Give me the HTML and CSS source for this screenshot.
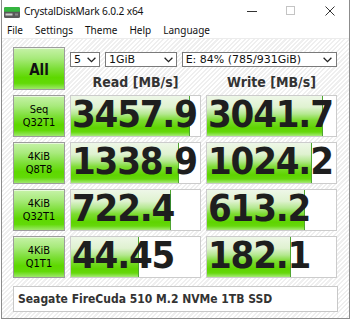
FILE: index.html
```html
<!DOCTYPE html>
<html>
<head>
<meta charset="utf-8">
<link rel="stylesheet" href="styles.css">
</head>
<body>
<div class="window">
  <div class="titlebar">
    <svg class="app-icon" width="16" height="11" viewBox="0 0 16 11">
      <rect x="0" y="0" width="16" height="11" rx="1.5" fill="#5a5a5a"/>
      <rect x="0" y="0" width="16" height="4.5" rx="1.5" fill="#35b540"/>
      <rect x="0" y="3" width="16" height="1.5" fill="#35b540"/>
      <rect x="1.5" y="6.5" width="7" height="2" fill="#cfcfcf"/>
      <rect x="11" y="6.5" width="3" height="2" fill="#8a8a8a"/>
    </svg>
    <span class="title">CrystalDiskMark 6.0.2 x64</span>
    <div class="controls">
      <span class="ctl"><svg width="10" height="10" viewBox="0 0 10 10"><line x1="0" y1="5.5" x2="10" y2="5.5" stroke="#333" stroke-width="1"/></svg></span>
      <span class="ctl"><svg width="10" height="10" viewBox="0 0 10 10"><rect x="0.5" y="0.5" width="8" height="8" fill="none" stroke="#c4c4c4" stroke-width="1"/></svg></span>
      <span class="ctl"><svg width="10" height="10" viewBox="0 0 10 10"><path d="M0.5 0.5 L9.5 9.5 M9.5 0.5 L0.5 9.5" stroke="#333" stroke-width="1"/></svg></span>
    </div>
  </div>
  <div class="menubar">
    <span>File</span><span>Settings</span><span>Theme</span><span>Help</span><span>Language</span>
  </div>
  <div class="main">
    <div class="grid">
      <div class="btn all">All</div>
      <div class="topright">
        <div class="selects">
          <div class="select s-count"><span>5</span><svg width="9" height="6" viewBox="0 0 9 6"><polyline points="0.6,0.8 4.5,4.7 8.4,0.8" fill="none" stroke="#222" stroke-width="1.3"/></svg></div>
          <div class="select s-size"><span>1GiB</span><svg width="9" height="6" viewBox="0 0 9 6"><polyline points="0.6,0.8 4.5,4.7 8.4,0.8" fill="none" stroke="#222" stroke-width="1.3"/></svg></div>
          <div class="select s-drive"><span>E: 84% (785/931GiB)</span><svg width="9" height="6" viewBox="0 0 9 6"><polyline points="0.6,0.8 4.5,4.7 8.4,0.8" fill="none" stroke="#222" stroke-width="1.3"/></svg></div>
        </div>
        <div class="headers">
          <div class="hdr">Read [MB/s]</div>
          <div class="hdr">Write [MB/s]</div>
        </div>
      </div>

      <div class="btn label">Seq<br>Q32T1</div>
      <div class="val" style="--w:119px"><span class="num">3457.9</span></div>
      <div class="val" style="--w:116px"><span class="num">3041.7</span></div>

      <div class="btn label">4KiB<br>Q8T8</div>
      <div class="val" style="--w:108px"><span class="num">1338.9</span></div>
      <div class="val" style="--w:105px"><span class="num">1024.2</span></div>

      <div class="btn label">4KiB<br>Q32T1</div>
      <div class="val" style="--w:100px"><span class="num">722.4</span></div>
      <div class="val" style="--w:98px"><span class="num">613.2</span></div>

      <div class="btn label">4KiB<br>Q1T1</div>
      <div class="val" style="--w:68px"><span class="num">44.45</span></div>
      <div class="val" style="--w:84px"><span class="num">182.1</span></div>
    </div>
    <div class="model">Seagate FireCuda 510 M.2 NVMe 1TB SSD</div>
  </div>
</div>
</body>
</html>
```

FILE: styles.css
```css
html, body {
  margin: 0;
  padding: 0;
  background: #ffffff;
}

.window {
  margin-left: 1px;
  width: 347px;
  height: 318px;
  border: 1px solid #8c8c8c;
  border-top: none;
  display: flex;
  flex-direction: column;
  background: #ffffff;
  overflow: hidden;
}

.titlebar {
  height: 22px;
  display: flex;
  align-items: center;
  font-family: "Noto Sans", sans-serif;
  font-size: 10.2px;
  color: #111;
}

.app-icon {
  margin-left: 2px;
  margin-right: 4px;
  margin-top: 3px;
}

.title {
  letter-spacing: -0.15px;
}

.controls {
  margin-left: auto;
  display: flex;
}

.ctl {
  width: 39px;
  height: 22px;
  display: flex;
  align-items: center;
  justify-content: center;
}

.menubar {
  height: 16px;
  display: flex;
  align-items: center;
  gap: 12px;
  padding-left: 5px;
  font-family: "Noto Sans", sans-serif;
  font-size: 10px;
  color: #111;
  border-bottom: 1px solid #ececec;
}

.main {
  flex: 1;
  padding: 8px 0 0 11px;
  background: repeating-linear-gradient(135deg, #ffffff 0, #ffffff 1.6px, #efefef 1.6px, #efefef 3.2px);
}

.grid {
  display: grid;
  grid-template-columns: 52px 131px 131px;
  grid-template-rows: 43px 42px 42px 42px 42px;
  column-gap: 5px;
  row-gap: 5px;
}

.btn {
  box-sizing: border-box;
  border: 1px solid #9c9c9c;
  background: linear-gradient(#c6f2a8 0%, #a8ea7c 25%, #7ddf38 50%, #5ed800 72%, #62da08 86%, #9ee86c 100%);
  display: flex;
  align-items: center;
  justify-content: center;
  text-align: center;
  color: #111;
  box-shadow: inset 0 1px 0 rgba(255,255,255,0.6);
}

.all {
  font-family: "DejaVu Sans Condensed", "DejaVu Sans", sans-serif;
  font-stretch: condensed;
  font-weight: bold;
  font-size: 15px;
  padding-top: 2px;
}

.label {
  font-family: "DejaVu Sans Condensed", "DejaVu Sans", sans-serif;
  font-stretch: condensed;
  font-size: 11px;
  line-height: 13px;
  color: #000;
}

.topright {
  grid-column: 2 / 4;
  display: flex;
  flex-direction: column;
}

.selects {
  margin-top: 5px;
  display: flex;
  gap: 5px;
}

.select {
  box-sizing: border-box;
  height: 15px;
  border: 1px solid #7a7a7a;
  background: #ffffff;
  display: flex;
  align-items: center;
  justify-content: space-between;
  padding: 0 3px 0 3px;
  font-family: "DejaVu Sans", sans-serif;
  font-size: 11px;
  color: #111;
}

.select span {
  line-height: 13px;
}

.s-count { width: 30px; }
.s-size { width: 72px; }
.s-drive { width: 156px; padding-right: 4px; }

.headers {
  display: grid;
  grid-template-columns: 131px 131px;
  column-gap: 5px;
  padding-top: 7px;
}

.hdr {
  text-align: center;
  font-family: "DejaVu Sans Condensed", "DejaVu Sans", sans-serif;
  font-stretch: condensed;
  font-weight: bold;
  font-size: 14px;
  line-height: 16px;
  color: #333;
}

.val {
  box-sizing: border-box;
  border: 1px solid #cccccc;
  background-color: #ffffff;
  background-image:
    linear-gradient(#4fa530, #4fa530),
    linear-gradient(#eef7e8 0%, #dff2d0 28%, #b4e890 45%, #7ddc32 60%, #5ed400 80%, #66d80c 90%, #a6ea78 100%);
  background-size: 1px 100%, var(--w) 100%;
  background-position: calc(var(--w) - 1px) 0, 0 0;
  background-repeat: no-repeat;
  padding: 0 0 0 1px;
  display: flex;
  align-items: flex-start;
}

.num {
  font-family: "DejaVu Sans Condensed", "DejaVu Sans", sans-serif;
  font-stretch: condensed;
  font-weight: bold;
  font-size: 38px;
  letter-spacing: -1.2px;
  line-height: 36px;
  color: #1e1e1e;
  white-space: nowrap;
}

.model {
  box-sizing: border-box;
  margin-top: 8px;
  width: 325px;
  height: 26px;
  border: 1px solid #c8c8c8;
  background: #ffffff;
  padding-left: 4px;
  font-family: "DejaVu Sans Condensed", "DejaVu Sans", sans-serif;
  font-stretch: condensed;
  font-weight: bold;
  font-size: 12px;
  line-height: 24px;
  color: #333;
}
```
